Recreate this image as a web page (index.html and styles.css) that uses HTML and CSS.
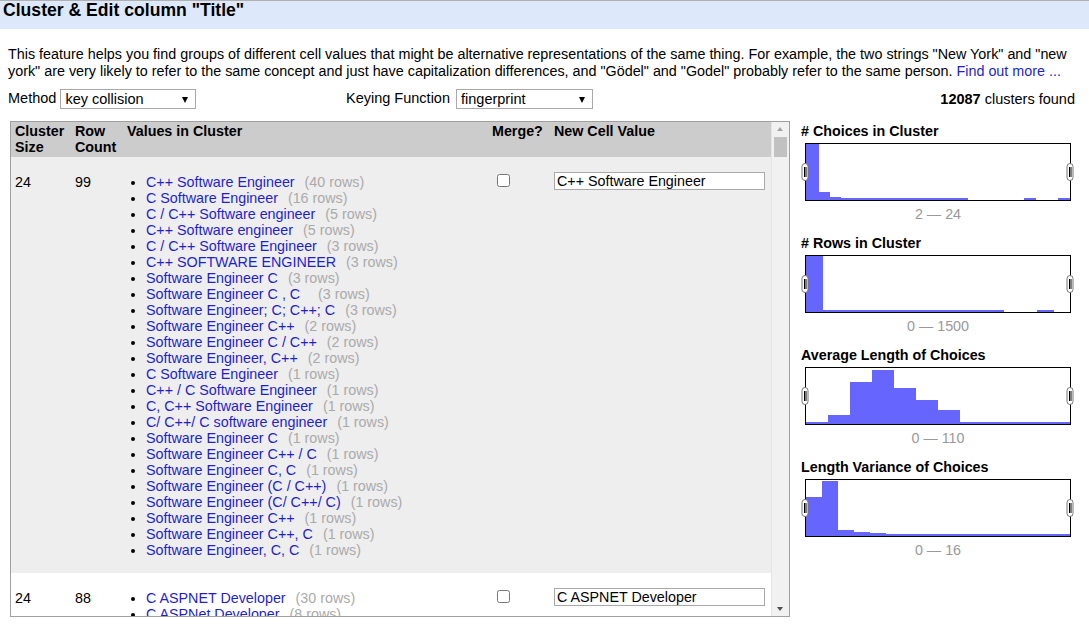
FILE: index.html
```html
<!DOCTYPE html>
<html>
<head>
<meta charset="utf-8">
<title>Cluster &amp; Edit</title>
<link rel="stylesheet" href="styles.css">
</head>
<body>
<div class="dialog-header">Cluster &amp; Edit column "Title"</div>
<div class="dialog-body">
  <p class="intro">This feature helps you find groups of different cell values that might be alternative representations of the same thing. For example, the two strings "New York" and "new york" are very likely to refer to the same concept and just have capitalization differences, and "Gödel" and "Godel" probably refer to the same person. <a class="link" href="#">Find out more ...</a></p>
  <div class="controls">
    <div class="ctl ctl-method">Method <span class="select w136"><span class="select-text">key collision</span></span></div>
    <div class="ctl ctl-key">Keying Function <span class="select w137 sel-key"><span class="select-text">fingerprint</span></span></div>
    <div class="ctl ctl-found"><b>12087</b> clusters found</div>
  </div>
  <div class="main">
    <div class="table-wrap">
      <div class="table-view">
        <table class="clusters">
          <colgroup><col class="c1"><col class="c2"><col class="c3"><col class="c4"><col class="c5"></colgroup>
          <thead>
            <tr><th>Cluster Size</th><th>Row Count</th><th>Values in Cluster</th><th>Merge?</th><th>New Cell Value</th></tr>
          </thead>
          <tbody>
            <tr class="odd">
              <td>24</td><td>99</td>
              <td>
                <ul class="values">
                  <li><a href="#">C++ Software Engineer</a> <span class="cnt">(40 rows)</span></li>
                  <li><a href="#">C Software Engineer</a> <span class="cnt">(16 rows)</span></li>
                  <li><a href="#">C / C++ Software engineer</a> <span class="cnt">(5 rows)</span></li>
                  <li><a href="#">C++ Software engineer</a> <span class="cnt">(5 rows)</span></li>
                  <li><a href="#">C / C++ Software Engineer</a> <span class="cnt">(3 rows)</span></li>
                  <li><a href="#">C++ SOFTWARE ENGINEER</a> <span class="cnt">(3 rows)</span></li>
                  <li><a href="#">Software Engineer C</a> <span class="cnt">(3 rows)</span></li>
                  <li><a href="#">Software Engineer C , C&nbsp;&nbsp;</a> <span class="cnt">(3 rows)</span></li>
                  <li><a href="#">Software Engineer; C; C++; C</a> <span class="cnt">(3 rows)</span></li>
                  <li><a href="#">Software Engineer C++</a> <span class="cnt">(2 rows)</span></li>
                  <li><a href="#">Software Engineer C / C++</a> <span class="cnt">(2 rows)</span></li>
                  <li><a href="#">Software Engineer, C++</a> <span class="cnt">(2 rows)</span></li>
                  <li><a href="#">C Software Engineer</a> <span class="cnt">(1 rows)</span></li>
                  <li><a href="#">C++ / C Software Engineer</a> <span class="cnt">(1 rows)</span></li>
                  <li><a href="#">C, C++ Software Engineer</a> <span class="cnt">(1 rows)</span></li>
                  <li><a href="#">C/ C++/ C software engineer</a> <span class="cnt">(1 rows)</span></li>
                  <li><a href="#">Software Engineer C</a> <span class="cnt">(1 rows)</span></li>
                  <li><a href="#">Software Engineer C++ / C</a> <span class="cnt">(1 rows)</span></li>
                  <li><a href="#">Software Engineer C, C</a> <span class="cnt">(1 rows)</span></li>
                  <li><a href="#">Software Engineer (C / C++)</a> <span class="cnt">(1 rows)</span></li>
                  <li><a href="#">Software Engineer (C/ C++/ C)</a> <span class="cnt">(1 rows)</span></li>
                  <li><a href="#">Software Engineer C++</a> <span class="cnt">(1 rows)</span></li>
                  <li><a href="#">Software Engineer C++, C</a> <span class="cnt">(1 rows)</span></li>
                  <li><a href="#">Software Engineer, C, C</a> <span class="cnt">(1 rows)</span></li>
                </ul>
              </td>
              <td><input type="checkbox" class="chk"></td>
              <td><input type="text" class="newval" value="C++ Software Engineer"></td>
            </tr>
            <tr class="even">
              <td>24</td><td>88</td>
              <td>
                <ul class="values">
                  <li><a href="#">C ASPNET Developer</a> <span class="cnt">(30 rows)</span></li>
                  <li><a href="#">C ASPNet Developer</a> <span class="cnt">(8 rows)</span></li>
                  <li><a href="#">C ASP.NET Developer</a> <span class="cnt">(6 rows)</span></li>
                </ul>
              </td>
              <td><input type="checkbox" class="chk"></td>
              <td><input type="text" class="newval" value="C ASPNET Developer"></td>
            </tr>
          </tbody>
        </table>
      </div>
      <div class="scrollbar">
        <div class="sb-arrow sb-up"></div>
        <div class="sb-track"><div class="sb-thumb"></div></div>
        <div class="sb-arrow sb-down"></div>
      </div>
    </div>
    <div class="facets">
      <div class="facet">
        <div class="facet-title"># Choices in Cluster</div>
        <svg class="hist" width="274" height="58" viewBox="0 0 274 58">
          <rect x="4.5" y="0.5" width="265" height="57" fill="#fff" stroke="#000"/>
          <g fill="#6666ff">
            <rect x="5" y="1" width="13" height="56"/>
            <rect x="18" y="49" width="11" height="8"/>
            <rect x="29" y="54" width="11" height="3"/>
            <rect x="40" y="55" width="127" height="2"/>
            <rect x="223" y="55" width="12" height="2"/>
            <rect x="257" y="55" width="12" height="2"/>
          </g>
          <g class="handle"><rect x="1" y="20.5" width="6" height="17" rx="3"/><line x1="3.5" y1="24" x2="3.5" y2="34"/><line x1="5" y1="24" x2="5" y2="34"/></g>
          <g class="handle"><rect x="266" y="20.5" width="6" height="17" rx="3"/><line x1="268.5" y1="24" x2="268.5" y2="34"/><line x1="270" y1="24" x2="270" y2="34"/></g>
        </svg>
        <div class="range">2 — 24</div>
      </div>
      <div class="facet">
        <div class="facet-title"># Rows in Cluster</div>
        <svg class="hist" width="274" height="58" viewBox="0 0 274 58">
          <rect x="4.5" y="0.5" width="265" height="57" fill="#fff" stroke="#000"/>
          <g fill="#6666ff">
            <rect x="5" y="1" width="17" height="56"/>
            <rect x="22" y="55" width="181" height="2"/>
            <rect x="236" y="55" width="17" height="2"/>
          </g>
          <g class="handle"><rect x="1" y="20.5" width="6" height="17" rx="3"/><line x1="3.5" y1="24" x2="3.5" y2="34"/><line x1="5" y1="24" x2="5" y2="34"/></g>
          <g class="handle"><rect x="266" y="20.5" width="6" height="17" rx="3"/><line x1="268.5" y1="24" x2="268.5" y2="34"/><line x1="270" y1="24" x2="270" y2="34"/></g>
        </svg>
        <div class="range">0 — 1500</div>
      </div>
      <div class="facet">
        <div class="facet-title">Average Length of Choices</div>
        <svg class="hist" width="274" height="58" viewBox="0 0 274 58">
          <rect x="4.5" y="0.5" width="265" height="57" fill="#fff" stroke="#000"/>
          <g fill="#6666ff">
            <rect x="5" y="55" width="22" height="2"/>
            <rect x="27" y="48" width="22" height="9"/>
            <rect x="49" y="15" width="22" height="42"/>
            <rect x="71" y="3" width="22" height="54"/>
            <rect x="93" y="21" width="22" height="36"/>
            <rect x="115" y="33" width="22" height="24"/>
            <rect x="137" y="43" width="22" height="14"/>
            <rect x="159" y="55" width="110" height="2"/>
          </g>
          <g class="handle"><rect x="1" y="20.5" width="6" height="17" rx="3"/><line x1="3.5" y1="24" x2="3.5" y2="34"/><line x1="5" y1="24" x2="5" y2="34"/></g>
          <g class="handle"><rect x="266" y="20.5" width="6" height="17" rx="3"/><line x1="268.5" y1="24" x2="268.5" y2="34"/><line x1="270" y1="24" x2="270" y2="34"/></g>
        </svg>
        <div class="range">0 — 110</div>
      </div>
      <div class="facet">
        <div class="facet-title">Length Variance of Choices</div>
        <svg class="hist" width="274" height="58" viewBox="0 0 274 58">
          <rect x="4.5" y="0.5" width="265" height="57" fill="#fff" stroke="#000"/>
          <g fill="#6666ff">
            <rect x="5" y="18" width="16" height="39"/>
            <rect x="21" y="2" width="16" height="55"/>
            <rect x="37" y="51" width="16" height="6"/>
            <rect x="53" y="53" width="16" height="4"/>
            <rect x="69" y="54" width="16" height="3"/>
            <rect x="85" y="55" width="184" height="2"/>
          </g>
          <g class="handle"><rect x="1" y="20.5" width="6" height="17" rx="3"/><line x1="3.5" y1="24" x2="3.5" y2="34"/><line x1="5" y1="24" x2="5" y2="34"/></g>
          <g class="handle"><rect x="266" y="20.5" width="6" height="17" rx="3"/><line x1="268.5" y1="24" x2="268.5" y2="34"/><line x1="270" y1="24" x2="270" y2="34"/></g>
        </svg>
        <div class="range">0 — 16</div>
      </div>
    </div>
  </div>
</div>
</body>
</html>
```

FILE: styles.css
```css
html, body {
  margin: 0;
  padding: 0;
  background: #fff;
  font-family: "Liberation Sans", Arial, sans-serif;
  font-size: 14.3px;
  color: #000;
  overflow: hidden;
}

.dialog-header {
  height: 28px;
  border-top: 1px solid #b0b0b0;
  background: #dde8fa;
  font-weight: bold;
  font-size: 17.6px;
  line-height: 19px;
  padding-left: 3px;
}

.dialog-body {
  padding: 0 14px 0 8px;
}

.intro {
  margin: 17px 0 0 0;
  font-size: 14.35px;
  line-height: 17px;
}

.link {
  color: #1f1fd0;
  text-decoration: none;
}

.controls {
  display: flex;
  align-items: center;
  height: 20px;
  margin-top: 9px;
  line-height: 16px;
  font-size: 14.5px;
}

.ctl-method {
  width: 338px;
}

.ctl-found {
  margin-left: auto;
  margin-right: 0;
}

.select {
  position: relative;
  display: inline-block;
  vertical-align: middle;
  height: 18px;
  border: 1px solid #a9a9a9;
  background: #fff;
  box-sizing: content-box;
  line-height: 18px;
}

.sel-key {
  margin-left: 2px;
}

.select::after {
  content: "";
  position: absolute;
  right: 7px;
  top: 7px;
  border-left: 3.5px solid transparent;
  border-right: 3.5px solid transparent;
  border-top: 6px solid #000;
}

.select-text {
  padding-left: 4px;
}

.w136 { width: 134px; }
.w137 { width: 135px; }

.main {
  display: flex;
  margin-top: 12px;
}

.table-wrap {
  display: flex;
  width: 778px;
  height: 494px;
  margin-left: 2px;
  border: 1px solid #a0a0a0;
  overflow: hidden;
}

.table-view {
  flex: 1;
  overflow: hidden;
}

.clusters {
  border-collapse: collapse;
  width: 761px;
  table-layout: fixed;
}

.c1 { width: 60px; }
.c2 { width: 52px; }
.c3 { width: 365px; }
.c4 { width: 62px; }
.c5 { width: 222px; }

.clusters th {
  background: #cccccc;
  text-align: left;
  vertical-align: top;
  font-weight: bold;
  padding: 1px 4px 2px;
  line-height: 16px;
}

.clusters td {
  vertical-align: top;
  padding: 17px 4px 15px;
  line-height: 16px;
}

.odd td { background: #eeeeee; }
.even td { background: #ffffff; }

.values {
  margin: 0;
  padding-left: 19px;
  white-space: nowrap;
}

.values a {
  color: #1f1fd0;
  text-decoration: none;
}

.cnt {
  color: #aaaaaa;
  margin-left: 6px;
}

.chk {
  width: 13px;
  height: 13px;
  margin: 0 3px 0 5px;
  vertical-align: top;
}

.newval {
  display: block;
  box-sizing: border-box;
  width: 211px;
  height: 18px;
  margin: -2px 0 0 0;
  padding: 0 2px;
  border: 1px solid #a9a9a9;
  font-family: "Liberation Sans", Arial, sans-serif;
  font-size: 14.3px;
  background: #fff;
  color: #000;
}

.scrollbar {
  width: 17px;
  background: #f1f1f1;
  border-left: 1px solid #e4e4e4;
  display: flex;
  flex-direction: column;
}

.sb-arrow {
  height: 15px;
  position: relative;
}

.sb-up::after, .sb-down::after {
  content: "";
  position: absolute;
  left: 5px;
  border-left: 3.5px solid transparent;
  border-right: 3.5px solid transparent;
}

.sb-up::after {
  top: 5px;
  border-bottom: 4px solid #a3a3a3;
}

.sb-down::after {
  top: 6px;
  border-top: 4px solid #505050;
}

.sb-track {
  flex: 1;
}

.sb-thumb {
  height: 20px;
  margin: 0 2px;
  background: #c1c1c1;
}

.facets {
  margin-left: 11px;
  width: 274px;
}

.facet {
  height: 112px;
}

.facet-title {
  font-weight: bold;
  line-height: 16px;
  padding-top: 2px;
  white-space: nowrap;
}

.hist {
  display: block;
  margin-top: 4px;
}

.handle rect {
  fill: #fff;
  stroke: #777;
  stroke-width: 1;
}

.handle line {
  stroke: #000;
  stroke-width: 1;
}

.range {
  text-align: center;
  color: #999999;
  line-height: 16px;
  margin-top: 5px;
}
```
